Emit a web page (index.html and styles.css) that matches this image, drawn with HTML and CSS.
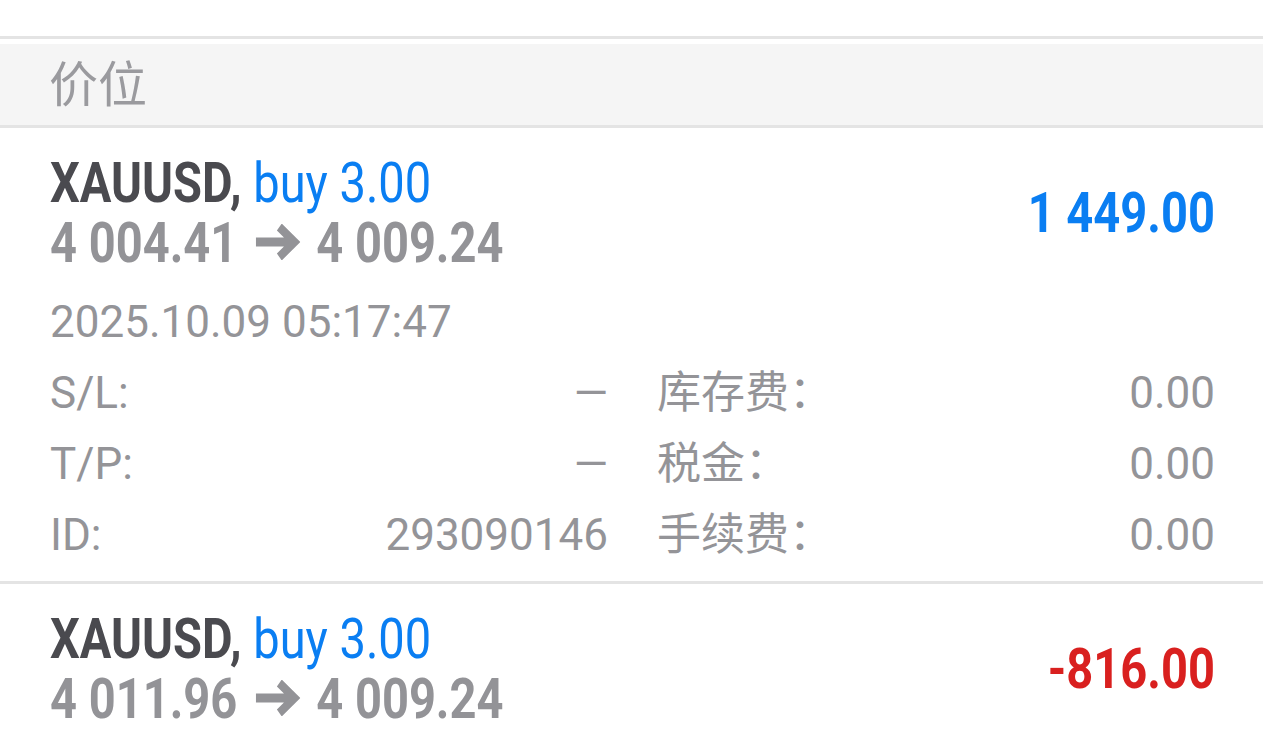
FILE: index.html
```html
<!DOCTYPE html>
<html lang="zh-CN">
<head>
    <meta charset="UTF-8">
    <meta name="viewport" content="width=device-width, initial-scale=1.0">
    <title>持仓</title>
    <link rel="stylesheet" href="styles.css">
</head>
<body>
    <div class="top-gap"></div>

    <div class="section-head">
        <span>价位</span>
    </div>

    <div class="position">
        <div class="summary">
            <div class="title">
                <div class="line"><span class="symbol">XAUUSD,</span> <span class="side">buy 3.00</span></div>
                <div class="line prices">4 004.41<svg class="arrow" viewBox="0 0 53 36"><path d="M0 18H46M28 3L46 18L28 33"/></svg>4 009.24</div>
            </div>
            <div class="profit up">1 449.00</div>
        </div>
        <div class="date">2025.10.09 05:17:47</div>
        <div class="details">
            <div class="pair"><span>S/L:</span><span>—</span></div>
            <div class="pair"><span>库存费：</span><span>0.00</span></div>
            <div class="pair"><span>T/P:</span><span>—</span></div>
            <div class="pair"><span>税金：</span><span>0.00</span></div>
            <div class="pair"><span>ID:</span><span>293090146</span></div>
            <div class="pair"><span>手续费：</span><span>0.00</span></div>
        </div>
    </div>

    <div class="position last">
        <div class="summary">
            <div class="title">
                <div class="line"><span class="symbol">XAUUSD,</span> <span class="side">buy 3.00</span></div>
                <div class="line prices">4 011.96<svg class="arrow" viewBox="0 0 53 36"><path d="M0 18H46M28 3L46 18L28 33"/></svg>4 009.24</div>
            </div>
            <div class="profit down">-816.00</div>
        </div>
    </div>
</body>
</html>
```

FILE: styles.css
```css
body {
    margin: 0;
    background: #fff;
    font-family: Roboto, "Noto Sans CJK SC", sans-serif;
    color: #949498;
    overflow: hidden;
}

.top-gap {
    height: 36px;
    border-bottom: 3px solid #e4e4e4;
    margin-bottom: 5px;
}

.section-head {
    height: 81px;
    background: #f5f5f5;
    border-bottom: 3px solid #e4e4e4;
    padding-left: 49px;
    display: flex;
    align-items: center;
    font-size: 49px;
    color: #9a9a9e;
}

.section-head span {
    margin-top: -9px;
}

.position {
    padding: 25px 48px 10px 50px;
    border-bottom: 3px solid #e4e4e4;
}

.position.last {
    border-bottom: none;
}

.summary {
    display: flex;
    justify-content: space-between;
    align-items: center;
}

.title .line {
    font-size: 56px;
    line-height: 60px;
    white-space: nowrap;
    transform: scaleX(.84);
    transform-origin: left center;
}

.symbol {
    font-weight: 700;
    color: #4a4a4f;
}

.side {
    color: #0a7ef2;
}

.prices {
    font-weight: 700;
    color: #939397;
}

.arrow {
    width: 53px;
    height: 36px;
    margin: 0 19px 0 22px;
    vertical-align: 2px;
}

.arrow path {
    fill: none;
    stroke: #939397;
    stroke-width: 9;
}

.profit {
    font-size: 56px;
    line-height: 60px;
    font-weight: 700;
    white-space: nowrap;
    transform: scaleX(.84);
    transform-origin: right center;
}

.profit.up {
    color: #0a7ef2;
}

.profit.down {
    color: #d9201f;
}

.date {
    margin-top: 14px;
    font-size: 44px;
    line-height: 71px;
}

.details {
    display: grid;
    grid-template-columns: 1fr 1fr;
    column-gap: 49px;
    font-size: 44px;
    line-height: 71px;
}

.pair {
    display: flex;
    justify-content: space-between;
}
```
